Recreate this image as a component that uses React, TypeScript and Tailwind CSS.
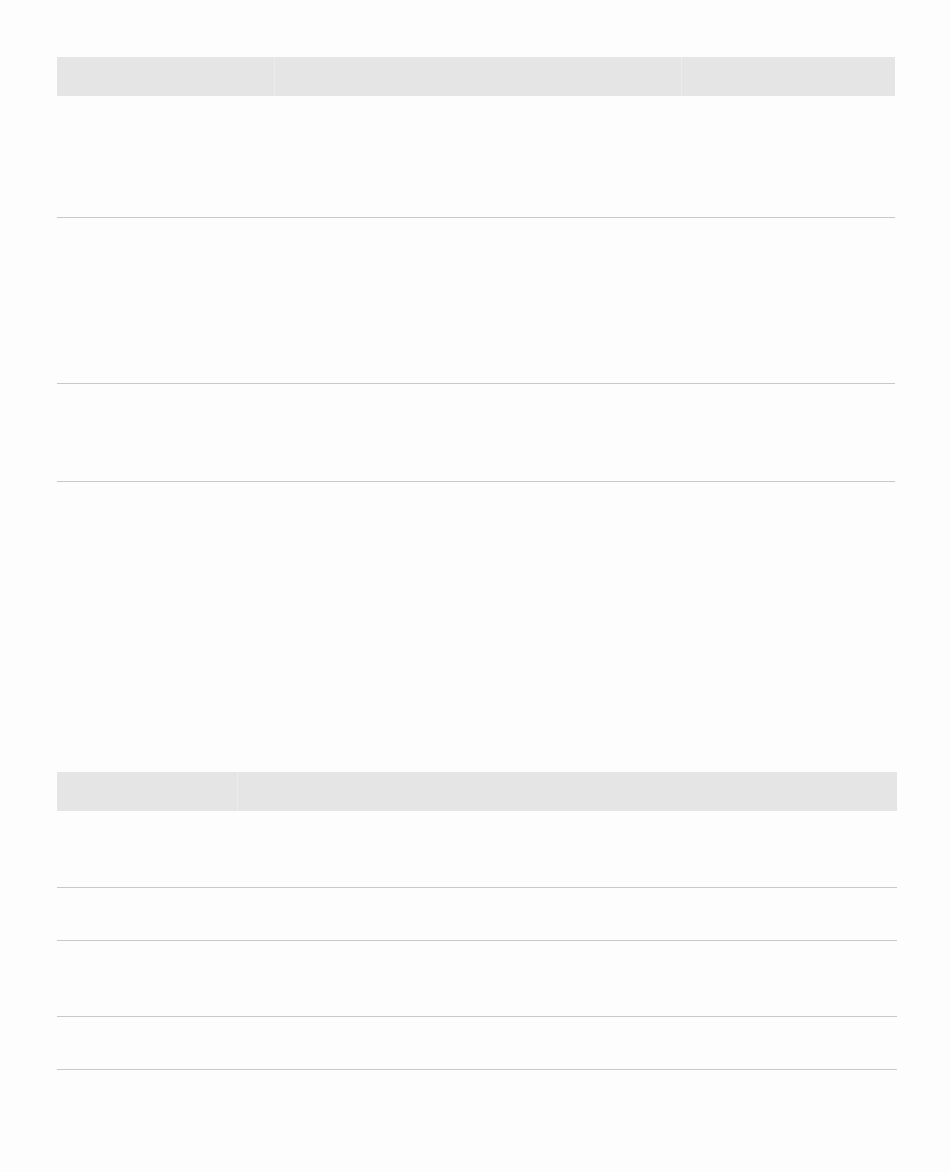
const firstRows = [121, 166, 98];
const secondRows = [77, 53, 76, 53];

function EmptyTable({
  width,
  cols,
  rows,
}: {
  width: string;
  cols: string[];
  rows: number[];
}) {
  return (
    <table className={`${width} table-fixed border-collapse`}>
      <colgroup>
        {cols.map((c, i) => (
          <col key={i} className={c} />
        ))}
      </colgroup>
      <thead>
        <tr className="h-[39px] bg-[#e5e5e5]">
          {cols.map((_, i) => (
            <th
              key={i}
              className={i < cols.length - 1 ? 'border-r border-[#ececec]' : ''}
            />
          ))}
        </tr>
      </thead>
      <tbody>
        {rows.map((h, i) => (
          <tr key={i} className="border-b border-[#c9c9c9]" style={{ height: h }}>
            {cols.map((_, j) => (
              <td key={j} />
            ))}
          </tr>
        ))}
      </tbody>
    </table>
  );
}

export default function App() {
  return (
    <div className="min-h-[1172px] w-full bg-[#fdfdfd] pl-[57px] pt-[57px] font-['Liberation_Sans',sans-serif]">
      <EmptyTable
        width="w-[838px]"
        cols={['w-[217px]', 'w-[407px]', 'w-[214px]']}
        rows={firstRows}
      />
      <div className="h-[290px]" />
      <EmptyTable
        width="w-[840px]"
        cols={['w-[180px]', 'w-[660px]']}
        rows={secondRows}
      />
    </div>
  );
}
